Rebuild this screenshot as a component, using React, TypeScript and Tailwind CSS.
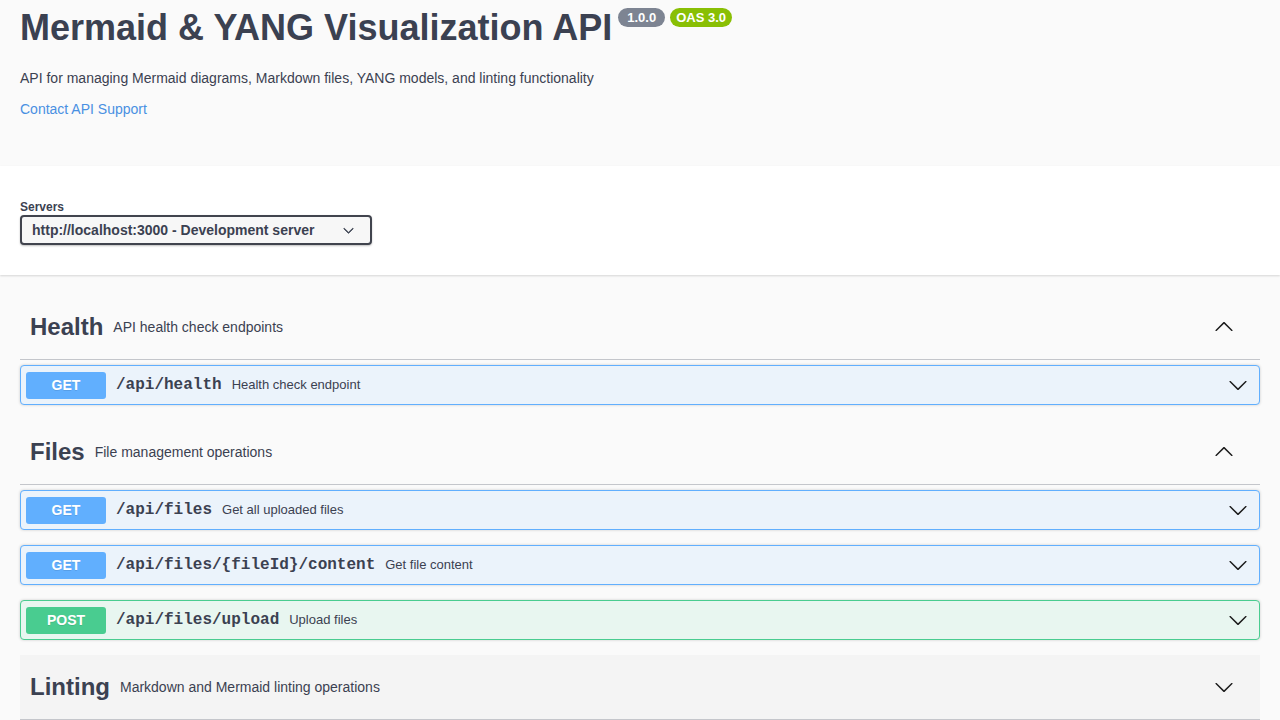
import React from 'react';

const SANS = { fontFamily: '"Liberation Sans", Arial, sans-serif' };
const MONO = { fontFamily: '"Liberation Mono", "Courier New", monospace' };

type Op = { method: 'GET' | 'POST'; path: string; summary: string };

const TAGS: { name: string; description: string; open: boolean; hovered?: boolean; ops: Op[] }[] = [
  {
    name: 'Health',
    description: 'API health check endpoints',
    open: true,
    ops: [{ method: 'GET', path: '/api/health', summary: 'Health check endpoint' }],
  },
  {
    name: 'Files',
    description: 'File management operations',
    open: true,
    ops: [
      { method: 'GET', path: '/api/files', summary: 'Get all uploaded files' },
      { method: 'GET', path: '/api/files/{fileId}/content', summary: 'Get file content' },
      { method: 'POST', path: '/api/files/upload', summary: 'Upload files' },
    ],
  },
  {
    name: 'Linting',
    description: 'Markdown and Mermaid linting operations',
    open: false,
    hovered: true,
    ops: [],
  },
];

function Arrow({ up = false, className = '' }: { up?: boolean; className?: string }) {
  return (
    <svg
      viewBox="0 0 20 20"
      width="20"
      height="20"
      className={`${up ? 'rotate-180' : ''} ${className}`}
      fill="#1b1b1b"
    >
      <path d="M17.418 6.109c.272-.268.709-.268.979 0s.271.701 0 .969l-7.908 7.83c-.27.268-.707.268-.979 0l-7.908-7.83c-.27-.268-.27-.701 0-.969.271-.268.709-.268.979 0L10 13.25l7.418-7.141z" />
    </svg>
  );
}

function Operation({ op }: { op: Op }) {
  const isGet = op.method === 'GET';
  return (
    <div
      className={`mb-[15px] flex h-[40px] items-center rounded-[4px] border p-[5px] shadow-[0_0_3px_rgba(0,0,0,0.19)] ${
        isGet ? 'border-[#61affe] bg-[#ebf3fb]' : 'border-[#49cc90] bg-[#e8f6f0]'
      }`}
    >
      <span
        className={`flex h-[27px] w-[80px] shrink-0 items-center justify-center rounded-[3px] text-[14px] font-bold text-white [text-shadow:0_1px_0_rgba(0,0,0,0.1)] ${
          isGet ? 'bg-[#61affe]' : 'bg-[#49cc90]'
        }`}
      >
        {op.method}
      </span>
      <span className="px-[10px] text-[16px] font-bold text-[#3b4151]" style={MONO}>
        {op.path}
      </span>
      <span className="flex-1 text-[13px] text-[#3b4151]">{op.summary}</span>
      <Arrow className="mr-[6px]" />
    </div>
  );
}

export default function App() {
  return (
    <div className="min-h-[720px] bg-[#fafafa] text-[#3b4151]" style={SANS}>
      {/* Info */}
      <div className="h-[166px] px-5 pt-[10px]">
        <div className="flex items-start">
          <h2 className="text-[36px] font-bold leading-[36px]">Mermaid &amp; YANG Visualization API</h2>
          <span className="-mt-[2px] ml-[6px] flex h-[19px] w-[47px] items-center justify-center rounded-full bg-[#7d8492] text-[13px] font-bold text-white">
            1.0.0
          </span>
          <span className="-mt-[2px] ml-[5px] flex h-[19px] w-[62px] items-center justify-center rounded-full bg-[#89bf04] text-[13px] font-bold text-white">
            OAS 3.0
          </span>
        </div>
        <p className="mt-[22px] text-[14px] leading-[20px]">
          API for managing Mermaid diagrams, Markdown files, YANG models, and linting functionality
        </p>
        <a className="mt-[11px] block text-[14px] leading-[20px] text-[#4990e2]" href="#">
          Contact API Support
        </a>
      </div>

      {/* Servers */}
      <div className="bg-white px-5 py-[30px] shadow-[0_1px_2px_0_rgba(0,0,0,0.15)]">
        <div className="pt-[3px] text-[12px] font-bold leading-[16px]">Servers</div>
        <div className="flex h-[30px] w-[352px] items-center justify-between rounded-[4px] border-2 border-[#41444e] bg-[#f7f7f7] pl-[10px] pr-[16px] text-[14px] font-bold shadow-[0_1px_2px_0_rgba(0,0,0,0.25)]">
          <span>http://localhost:3000 - Development server</span>
          <svg viewBox="0 0 20 20" width="11" height="11" fill="#3b4151">
            <path d="M17.418 6.109c.272-.268.709-.268.979 0s.271.701 0 .969l-7.908 7.83c-.27.268-.707.268-.979 0l-7.908-7.83c-.27-.268-.27-.701 0-.969.271-.268.709-.268.979 0L10 13.25l7.418-7.141z" stroke="#3b4151" strokeWidth="1.2" />
          </svg>
        </div>
      </div>

      {/* Tags */}
      <div className="px-5 pt-5">
        {TAGS.map((tag) => (
          <div key={tag.name}>
            <div
              className={`mb-[5px] flex h-[65px] items-center border-b border-[#c4c6cb] pl-[10px] pr-[26px] ${
                tag.hovered ? 'bg-[#f4f4f4]' : ''
              }`}
            >
              <h3 className="text-[24px] font-bold">{tag.name}</h3>
              <span className="ml-[10px] flex-1 text-[14px]">{tag.description}</span>
              <Arrow up={tag.open} />
            </div>
            {tag.open && (
              <div>
                {tag.ops.map((op) => (
                  <Operation key={op.path + op.method} op={op} />
                ))}
              </div>
            )}
          </div>
        ))}
      </div>
    </div>
  );
}
